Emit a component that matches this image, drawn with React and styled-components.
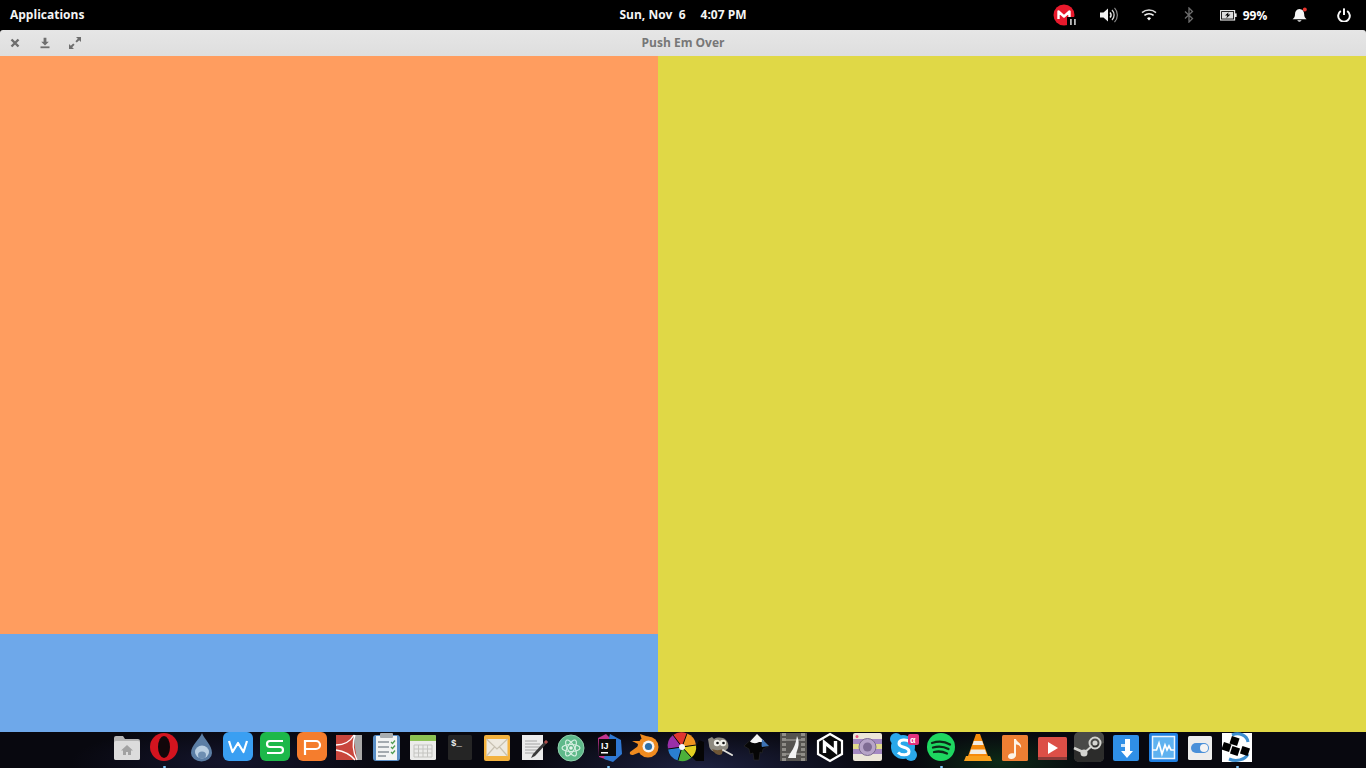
import React from 'react';
import styled, { createGlobalStyle } from 'styled-components';

const GlobalStyle = createGlobalStyle`
  html, body {
    margin: 0;
    padding: 0;
    height: 100%;
    overflow: hidden;
    background: #000;
    font-family: "Open Sans", "Noto Sans", sans-serif;
  }
`;

const Desktop = styled.div`
  width: 1366px;
  height: 768px;
  display: flex;
  flex-direction: column;
  background: #000;
`;

const Panel = styled.header`
  height: 30px;
  flex: none;
  display: grid;
  grid-template-columns: 1fr auto 1fr;
  align-items: center;
  background: #000;
  color: #fff;
  font-size: 12px;
  font-weight: 700;
`;

const AppsMenu = styled.div`
  padding-left: 10px;
  padding-bottom: 1px;
  color: #f4f4f4;
`;

const Clock = styled.div`
  display: flex;
  gap: 15px;
  white-space: pre;
  padding-bottom: 1px;
  color: #f4f4f4;
`;

const Tray = styled.div`
  display: flex;
  justify-content: flex-end;
  align-items: center;
  height: 100%;
`;

const TrayItem = styled.div`
  width: ${(p) => p.$w}px;
  height: 100%;
  display: flex;
  align-items: center;
  justify-content: center;
  gap: 6px;
`;

const Window = styled.main`
  flex: 1;
  min-height: 0;
  display: flex;
  flex-direction: column;
`;

const TitleBar = styled.div`
  height: 26px;
  flex: none;
  display: grid;
  grid-template-columns: 1fr auto 1fr;
  align-items: center;
  background: linear-gradient(#e6e6e6, #dedede);
  border-radius: 3px 3px 0 0;
`;

const WindowButtons = styled.div`
  display: flex;
`;

const WindowButton = styled.div`
  width: 30px;
  height: 26px;
  display: flex;
  align-items: center;
  justify-content: center;
`;

const Title = styled.div`
  font-size: 12px;
  font-weight: 700;
  color: #777;
  padding-bottom: 1px;
`;

const Game = styled.div`
  flex: 1;
  min-height: 0;
  display: flex;
`;

const LeftColumn = styled.div`
  width: 658px;
  flex: none;
  display: flex;
  flex-direction: column;
`;

const OrangeBlock = styled.div`
  flex: 1;
  background: #ff9d5f;
`;

const BlueBlock = styled.div`
  height: 98px;
  background: #6ea8ea;
`;

const YellowBlock = styled.div`
  flex: 1;
  background: #e0d846;
`;

const Dock = styled.footer`
  height: 36px;
  flex: none;
  display: flex;
  justify-content: center;
  padding-right: 2px;
  box-sizing: border-box;
  background:
    radial-gradient(ellipse 180px 40px at 700px 36px, #1d2140 0%, transparent 100%),
    radial-gradient(ellipse 90px 30px at 1000px 30px, #0c2a16 0%, transparent 100%),
    radial-gradient(ellipse 160px 36px at 230px 30px, #14152c 0%, transparent 100%),
    #08080f;
`;

const DockItem = styled.div`
  position: relative;
  width: 37px;
  height: 36px;
  display: flex;
  justify-content: center;

  &::after {
    content: '';
    display: ${(p) => (p.$running ? 'block' : 'none')};
    position: absolute;
    left: 17px;
    bottom: 0;
    width: 3px;
    height: 2px;
    border-radius: 1px;
    background: #7fc4f5;
  }
`;

const DockIcon = styled.svg`
  width: 36px;
  height: 36px;
  overflow: visible;
`;

const Glyph = ({ children, size = 16, w, h }) => (
  <svg width={w || size} height={h || size} viewBox={`0 0 ${w || size} ${h || size}`}>{children}</svg>
);

const CloseIcon = () => (
  <Glyph size={10}>
    <path d="M1.5 1.5l7 7M8.5 1.5l-7 7" stroke="#6e6e6e" strokeWidth="2.4" fill="none" />
  </Glyph>
);

const MinimizeIcon = () => (
  <Glyph size={12}>
    <path d="M4.6 0.8h2.8v4h2.4L6 8.6 2.2 4.8h2.4z" fill="#6e6e6e" />
    <rect x="1.5" y="9.4" width="9" height="1.8" fill="#6e6e6e" />
  </Glyph>
);

const MaximizeIcon = () => (
  <Glyph size={14}>
    <path d="M8 1h5v5l-1.8-1.8-2.4 2.4-1.4-1.4 2.4-2.4zM1 13V8l1.8 1.8 2.4-2.4 1.4 1.4-2.4 2.4L6 13z" fill="#6e6e6e" />
  </Glyph>
);

const MegaTray = () => (
  <Glyph w={26} h={22}>
    <circle cx="11" cy="11" r="10.5" fill="#e8192c" />
    <path d="M5.5 15V7.5l5.5 5 5.5-5V15" stroke="#fff" strokeWidth="2.4" fill="none" strokeLinejoin="round" />
    <rect x="14" y="13" width="12" height="9" fill="#000" />
    <rect x="17" y="15" width="1.8" height="6" fill="#bbb" />
    <rect x="21" y="15" width="1.8" height="6" fill="#bbb" />
  </Glyph>
);

const VolumeIcon = () => (
  <Glyph w={20} h={18}>
    <path d="M1 6.5h3.5L9 2.5v13l-4.5-4H1z" fill="#f2f2f2" />
    <path d="M11 6.5a3.5 3.5 0 0 1 0 5" stroke="#f2f2f2" strokeWidth="1.5" fill="none" />
    <path d="M13 4a7 7 0 0 1 0 10" stroke="#d8d8d8" strokeWidth="1.3" fill="none" />
    <path d="M15.5 1.8a10.5 10.5 0 0 1 0 14.4" stroke="#8c8c8c" strokeWidth="1.2" fill="none" />
  </Glyph>
);

const WifiIcon = () => (
  <Glyph w={16} h={12}>
    <path d="M1 3.6a10.5 10.5 0 0 1 14 0" stroke="#d8d8d8" strokeWidth="1.5" fill="none" />
    <path d="M3.4 6.4a7 7 0 0 1 9.2 0" stroke="#f2f2f2" strokeWidth="1.5" fill="none" />
    <path d="M6 9.2a3 3 0 0 1 4 0L8 11.4z" fill="#fff" />
  </Glyph>
);

const BluetoothIcon = () => (
  <Glyph w={10} h={16}>
    <path d="M1 4.5l7.5 7L5 15V1l3.5 3.5L1 11.5" stroke="#6c6c6c" strokeWidth="1.3" fill="none" />
  </Glyph>
);

const BatteryIcon = () => (
  <Glyph w={17} h={12}>
    <rect x="0.6" y="1.6" width="14" height="9.4" fill="none" stroke="#eee" strokeWidth="1.1" />
    <rect x="15" y="4.4" width="1.6" height="3.6" fill="#eee" />
    <rect x="2" y="3" width="11.2" height="6.6" fill="#ddd" />
    <path d="M8.6 3.2L5 6.6h2.4L6.2 9.4 10.4 5.6H8z" fill="#000" />
  </Glyph>
);

const BellIcon = () => (
  <Glyph size={16}>
    <path d="M7.4 2c-3 .3-4.400 2.600-4.400 5.200 0 2.400-.9 3.800-2.400 5.100h14c-1.500-1.300-2.400-2.700-2.400-5.100 0-2.800-1.800-5-4.800-5.200z" fill="#f6f6f6" />
    <path d="M5.200 13.200a2.400 2.400 0 0 0 4.400 0z" fill="#f6f6f6" />
    <circle cx="12.800" cy="2.400" r="2" fill="#e8352e" />
  </Glyph>
);

const PowerIcon = () => (
  <Glyph size={14}>
    <path d="M3.800 3a5.800 5.800 0 1 0 6.400 0" stroke="#f8f8f8" strokeWidth="2" fill="none" />
    <rect x="6" y="0.400" width="2" height="6.600" fill="#f8f8f8" />
  </Glyph>
);

const dockIcons = [
  { name: 'files', art: (
    <>
      <path d="M5 6a2 2 0 0 1 2-2h7l2 3h13a2 2 0 0 1 2 2v17a2 2 0 0 1-2 2H7a2 2 0 0 1-2-2z" fill="#b5b5b5" />
      <rect x="5" y="9" width="26" height="19" rx="2" fill="#dcdcdc" />
      <path d="M18 13l-6 5.500h2V23h3v-3h2v3h3v-4.500h2z" fill="#a2a2a2" />
    </>
  ) },
  { name: 'opera', running: true, art: (
    <>
      <circle cx="18" cy="15" r="14" fill="#d3141f" />
      <ellipse cx="18" cy="15" rx="6" ry="11" fill="#12070a" />
    </>
  ) },
  { name: 'drop', art: (
    <>
      <path d="M19 1c2 6 10 12 10 20a10.500 8.500 0 0 1-21 0C8 13 17 7 19 1z" fill="#5b7ea5" />
      <ellipse cx="19" cy="20" rx="7" ry="6.500" fill="#b9cfe2" />
      <ellipse cx="19" cy="23" rx="4" ry="3.500" fill="#6e8fb2" />
    </>
  ) },
  { name: 'wps-writer', art: (
    <>
      <rect x="3" y="0" width="30" height="29" rx="6" fill="#3a9ff2" />
      <path d="M9 9l3.500 11 5.500-9 5.500 9L27 9" stroke="#fff" strokeWidth="2.200" fill="none" strokeLinejoin="round" />
    </>
  ) },
  { name: 'wps-sheets', art: (
    <>
      <rect x="3" y="0" width="30" height="29" rx="6" fill="#1db84a" />
      <path d="M26 9H13a3 3 0 0 0 0 6h10a3 3 0 0 1 0 6H10" stroke="#fff" strokeWidth="2.200" fill="none" />
    </>
  ) },
  { name: 'wps-slides', art: (
    <>
      <rect x="3" y="0" width="30" height="29" rx="6" fill="#f57d2d" />
      <path d="M11 23V9h11a3.500 3.500 0 0 1 0 8H11" stroke="#fff" strokeWidth="2.200" fill="none" />
    </>
  ) },
  { name: 'pdf', art: (
    <>
      <rect x="5" y="3" width="26" height="25" fill="#c9463d" />
      <path d="M22 3h9v25h-5z" fill="#a9a9a9" />
      <path d="M5 13c8 0 14-3 18-10M5 18c7 1 14 4 19 10M24 3c-3 8-2 17 2 25" stroke="#fff" strokeWidth="1.300" fill="none" />
    </>
  ) },
  { name: 'notes', art: (
    <>
      <rect x="5" y="3" width="27" height="26" rx="3" fill="#5a8fc7" />
      <rect x="8" y="4" width="21" height="24" fill="#f2f4f4" />
      <rect x="12" y="1" width="13" height="5" rx="1" fill="#a8adb0" />
      <path d="M10 10h11M10 15h11M10 20h11M10 24h8" stroke="#8a9299" strokeWidth="1.300" />
      <path d="M23 10l1.500 1.500 2.500-3M23 15l1.500 1.500 2.500-3M23 20l1.500 1.500 2.500-3" stroke="#4f9c53" strokeWidth="1.300" fill="none" />
    </>
  ) },
  { name: 'calendar', art: (
    <>
      <rect x="5" y="3" width="26" height="25" rx="1.500" fill="#ececea" />
      <path d="M5 4.500A1.500 1.500 0 0 1 6.500 3h23A1.500 1.500 0 0 1 31 4.500V9H5z" fill="#8cc152" />
      <path d="M9 13h18M9 17h18M9 21h18M9 25h18M9 13v12M13.500 13v12M18 13v12M22.500 13v12M27 13v12" stroke="#c4c4c0" strokeWidth="1" />
    </>
  ) },
  { name: 'terminal', art: (
    <>
      <rect x="6" y="3" width="24" height="25" rx="1.500" fill="#252525" />
      <text x="9" y="14" fontFamily="Liberation Mono, monospace" fontSize="9" fontWeight="700" fill="#eee">$_</text>
    </>
  ) },
  { name: 'mail', art: (
    <>
      <rect x="5" y="3" width="26" height="26" rx="2" fill="#f3b23e" />
      <rect x="7.500" y="7" width="21" height="17" fill="#eeeae0" />
      <path d="M7.500 7L18 17 28.500 7M7.500 24l8-9M28.500 24l-8-9" stroke="#c8c2b2" strokeWidth="1.200" fill="none" />
    </>
  ) },
  { name: 'editor', art: (
    <>
      <rect x="6" y="3" width="21" height="25" fill="#ebebeb" />
      <path d="M9 9h12M9 12h15M9 15h15M9 18h12M9 21h9" stroke="#a4a4a4" strokeWidth="1" />
      <path d="M30 8l2 2-13 14-4 2 2-4z" fill="#3a3a3a" />
      <path d="M30 8l2 2-2 2-2-2z" fill="#b04a48" />
    </>
  ) },
  { name: 'atom', art: (
    <>
      <circle cx="18" cy="16" r="13" fill="#5fb98a" />
      <circle cx="18" cy="16" r="13" fill="none" stroke="#8fd0ac" strokeWidth="1" />
      <g stroke="#d6f0e2" strokeWidth="1.200" fill="none">
        <ellipse cx="18" cy="16" rx="9" ry="3.500" />
        <ellipse cx="18" cy="16" rx="9" ry="3.500" transform="rotate(60 18 16)" />
        <ellipse cx="18" cy="16" rx="9" ry="3.500" transform="rotate(120 18 16)" />
      </g>
      <circle cx="18" cy="16" r="1.800" fill="#e4f6ec" />
    </>
  ) },
  { name: 'idea', running: true, art: (
    <>
      <path d="M8 6l8-4 6 6-4 20-9-3z" fill="#c2348e" />
      <path d="M20 2l11 6 1 14-9 8-9-3z" fill="#2f78d2" />
      <rect x="9" y="7" width="17" height="17" fill="#0c0c0c" />
      <text x="11" y="17" fontFamily="Liberation Sans, sans-serif" fontSize="9" fontWeight="700" fill="#fff">IJ</text>
      <rect x="11" y="20" width="7" height="1.500" fill="#fff" />
    </>
  ) },
  { name: 'blender', art: (
    <>
      <path d="M13 2l9 3-6 6z" fill="#ef8a1f" />
      <path d="M5 9h12v6z" fill="#ef8a1f" />
      <path d="M3 20l11-8 2 7-10 4c-2 .5-4-1-3-3z" fill="#ef8a1f" />
      <circle cx="21" cy="15" r="10.500" fill="#ef8a1f" />
      <circle cx="21.500" cy="14.500" r="6" fill="#f4f4f4" />
      <circle cx="21.500" cy="14.500" r="3.600" fill="#2d6ea6" />
    </>
  ) },
  { name: 'aperture', art: (
    <>
      <path d="M18 15l14 14H40V10l-5-2-3 7z" fill="#050505" />
      <path d="M18 15L9 3a14 14 0 0 1 14-1.500z" fill="#e0342f" />
      <path d="M18 15l5-13.500A14 14 0 0 1 32 13z" fill="#f0931f" />
      <path d="M18 15l14-2a14 14 0 0 1-4.500 12.500z" fill="#e3d021" />
      <path d="M18 15l9.500 10.500A14 14 0 0 1 14 28.500z" fill="#4bb03a" />
      <path d="M18 15l-4 13.500A14 14 0 0 1 4 17z" fill="#2a7fd0" />
      <path d="M18 15L4 17A14 14 0 0 1 9 3z" fill="#9a2fa8" />
      <path d="M18 15L9 3M18 15l5-13.500M18 15l14-2M18 15l9.500 10.500M18 15l-4 13.500M18 15L4 17" stroke="#0a0a0a" strokeWidth="1" />
      <circle cx="18" cy="15" r="3" fill="#f8f8f8" />
    </>
  ) },
  { name: 'gimp', art: (
    <>
      <path d="M7 7l4-2 2 2c3-2 9-2 12 1 2 2 3 5 2 8-2 3-8 5-13 4-4-1-6-4-6-7z" fill="#8d8a80" />
      <circle cx="16" cy="11" r="3.200" fill="#f0f0ea" />
      <circle cx="22" cy="11" r="3.200" fill="#f0f0ea" />
      <circle cx="16.500" cy="11" r="1.300" fill="#111" />
      <circle cx="22.500" cy="11" r="1.300" fill="#111" />
      <path d="M11 17c3 1.500 8 1.500 11 0l-1 5c-3 2-7 1-10-5z" fill="#6f5636" />
      <path d="M22 18l9 5" stroke="#e0e0da" strokeWidth="2" strokeLinecap="round" />
    </>
  ) },
  { name: 'inkscape', art: (
    <>
      <path d="M19 2l12 12-6 3-1 4-2-1-1 8h-5l-1-7-3 1-1-5-5-3z" fill="#060606" stroke="#2c2c2c" strokeWidth=".6" />
      <path d="M19 2l7 7c-2 2-4 .5-6 1.500-2 1-6 1-8-1z" fill="#f4f4f4" />
      <path d="M24 7l7 7-7 1c-1-2 0-5 0-8z" fill="#3d73b5" />
    </>
  ) },
  { name: 'film', art: (
    <>
      <rect x="5" y="1" width="27" height="28" fill="#55534f" />
      <path d="M9 1v28M28 1v28" stroke="#908e88" strokeWidth="4" strokeDasharray="3 2" />
      <path d="M11 8h15M11 22h15" stroke="#b2b0aa" strokeWidth="1" />
      <path d="M22 4c-1 6-2 9-4 13-2 3-4 6-5 9h8c0-5 1-7 2-10 1-4 1-8-1-12z" fill="#f2f2f2" />
    </>
  ) },
  { name: 'nylas', art: (
    <>
      <path d="M18 2l12 7v13l-12 7-12-7V9z" fill="#0a0a0a" stroke="#fff" strokeWidth="2.200" />
      <path d="M12.500 21V10.500L23.500 19.500V9" stroke="#fff" strokeWidth="3.400" fill="none" />
    </>
  ) },
  { name: 'camera', art: (
    <>
      <rect x="4" y="1" width="29" height="28" rx="2" fill="#ece6d8" />
      <rect x="4" y="7" width="29" height="5" fill="#a58ac2" />
      <rect x="4" y="12" width="29" height="5" fill="#e2dc8e" />
      <rect x="4" y="17" width="29" height="5" fill="#a58ac2" />
      <circle cx="18.500" cy="15" r="8.500" fill="#b7a4c8" stroke="#7a6a8e" strokeWidth="1" />
      <circle cx="18.500" cy="15" r="4.500" fill="#7f6c94" />
      <circle cx="8" cy="4.500" r="1.500" fill="#ea5a82" />
    </>
  ) },
  { name: 'skype', art: (
    <>
      <circle cx="10" cy="7" r="6" fill="#2aa8ea" />
      <circle cx="25" cy="23" r="6" fill="#2aa8ea" />
      <circle cx="17" cy="15" r="12" fill="#2aa8ea" />
      <path d="M23 9.500c-2-2-10-2.500-10 2 0 5 10 2.500 10 8 0 4.500-8 4-11 1" stroke="#fff" strokeWidth="3" fill="none" />
      <rect x="22" y="2" width="11" height="11" rx="2" fill="#e3327e" />
      <text x="24" y="10.500" fontFamily="Liberation Sans, sans-serif" fontSize="9" fontWeight="700" fill="#fff">α</text>
    </>
  ) },
  { name: 'spotify', running: true, art: (
    <>
      <circle cx="18" cy="15" r="14" fill="#1ed760" />
      <path d="M9 11c6-2 13-1.500 18 1.500M10 15.500c5-1.500 11-1 15.500 1.500M11 20c4.500-1 9-.5 13 1.500" stroke="#0d2b18" strokeWidth="2.300" strokeLinecap="round" fill="none" />
    </>
  ) },
  { name: 'vlc', art: (
    <>
      <path d="M16 2h4l8 22H8z" fill="#f58a0b" />
      <path d="M13.800 9h8.400l1.300 4H12.500zM11 17.500h14l1.500 4.500H9.500z" fill="#f1ece3" />
      <path d="M6 24h24l2 5H4z" fill="#f8a01c" />
    </>
  ) },
  { name: 'music', art: (
    <>
      <rect x="5" y="3" width="26" height="26" rx="1.500" fill="#ee7f33" />
      <path d="M17 7h2c.5 3 6 4 5 9-1-2.500-3-3.500-5-3.500V23c0 2.500-2.500 4-5 4-2 0-3-1-3-2.500 0-2.500 3-4 6-3z" fill="#fdf3e6" />
    </>
  ) },
  { name: 'video', art: (
    <>
      <rect x="4" y="5" width="29" height="23" rx="1.500" fill="#dc4f47" />
      <rect x="4" y="25" width="29" height="3" fill="#8a3a38" />
      <path d="M14 10l10 6-10 6z" fill="#fff" />
    </>
  ) },
  { name: 'steam', art: (
    <>
      <rect x="3" y="0" width="30" height="30" rx="5" fill="#4a4a48" />
      <path d="M3 15l11 5 8-6 11-3v14a5 5 0 0 1-5 5H8a5 5 0 0 1-5-5z" fill="#2c2c2b" />
      <circle cx="24" cy="11" r="5.500" fill="none" stroke="#d4d4d0" strokeWidth="2" />
      <circle cx="24" cy="11" r="2.500" fill="#d4d4d0" />
      <path d="M3 16l10 4.500" stroke="#d4d4d0" strokeWidth="2.500" />
      <circle cx="13" cy="21" r="3.500" fill="#d4d4d0" />
      <path d="M14 20l7-6" stroke="#d4d4d0" strokeWidth="2" />
    </>
  ) },
  { name: 'downloader', art: (
    <>
      <rect x="5" y="3" width="26" height="26" rx="2" fill="#2f8fe6" />
      <path d="M17 7h5v12h3l-6 7-6-7h4z" fill="#fff" />
      <path d="M13 12h4v3h-4z" fill="#cfe6fa" />
    </>
  ) },
  { name: 'monitor', art: (
    <>
      <rect x="4" y="1" width="29" height="29" rx="2" fill="#1f7fe0" />
      <rect x="7.500" y="4.500" width="22" height="22" fill="#5fb2f0" stroke="#eef6fd" strokeWidth="1.500" />
      <path d="M7.500 18h4l2.500-7 3 11 3-9 2 5 2-4 2 4h3" stroke="#fff" strokeWidth="1.700" fill="none" />
    </>
  ) },
  { name: 'toggle', art: (
    <>
      <rect x="6" y="4" width="24" height="24" rx="1.500" fill="#ededed" />
      <rect x="9" y="11" width="18" height="10" rx="5" fill="#4a90d9" />
      <circle cx="22" cy="16" r="4" fill="#f4f4f4" />
    </>
  ) },
  { name: 'blocks', running: true, art: (
    <>
      <rect x="3" y="1" width="30" height="29" fill="#fff" />
      <path d="M13 3c7-3 15 0 16 7M29 22c-3 6-12 8-19 5" stroke="#3d8fd0" strokeWidth="3" fill="none" />
      <rect x="11.500" y="5" width="8" height="8" fill="#000" transform="rotate(18 15.500 9)" />
      <rect x="3.500" y="11" width="8" height="8" fill="#000" transform="rotate(18 7.500 15)" />
      <rect x="12" y="15" width="8" height="8" fill="#000" transform="rotate(18 16 19)" />
      <rect x="22" y="15" width="8" height="8" fill="#000" transform="rotate(18 26 19)" />
    </>
  ) },
];

export default function App() {
  return (
    <Desktop>
      <GlobalStyle />
      <Panel>
        <AppsMenu>Applications</AppsMenu>
        <Clock>
          <span>Sun, Nov  6</span>
          <span>4:07 PM</span>
        </Clock>
        <Tray>
          <TrayItem $w={44}><MegaTray /></TrayItem>
          <TrayItem $w={41}><VolumeIcon /></TrayItem>
          <TrayItem $w={40}><WifiIcon /></TrayItem>
          <TrayItem $w={40}><BluetoothIcon /></TrayItem>
          <TrayItem $w={69}><BatteryIcon /><span>99%</span></TrayItem>
          <TrayItem $w={44}><BellIcon /></TrayItem>
          <TrayItem $w={44}><PowerIcon /></TrayItem>
        </Tray>
      </Panel>
      <Window>
        <TitleBar>
          <WindowButtons>
            <WindowButton><CloseIcon /></WindowButton>
            <WindowButton><MinimizeIcon /></WindowButton>
            <WindowButton><MaximizeIcon /></WindowButton>
          </WindowButtons>
          <Title>Push Em Over</Title>
        </TitleBar>
        <Game>
          <LeftColumn>
            <OrangeBlock />
            <BlueBlock />
          </LeftColumn>
          <YellowBlock />
        </Game>
      </Window>
      <Dock>
        {dockIcons.map((icon) => (
          <DockItem key={icon.name} $running={icon.running}>
            <DockIcon viewBox="0 0 36 36">{icon.art}</DockIcon>
          </DockItem>
        ))}
      </Dock>
    </Desktop>
  );
}
